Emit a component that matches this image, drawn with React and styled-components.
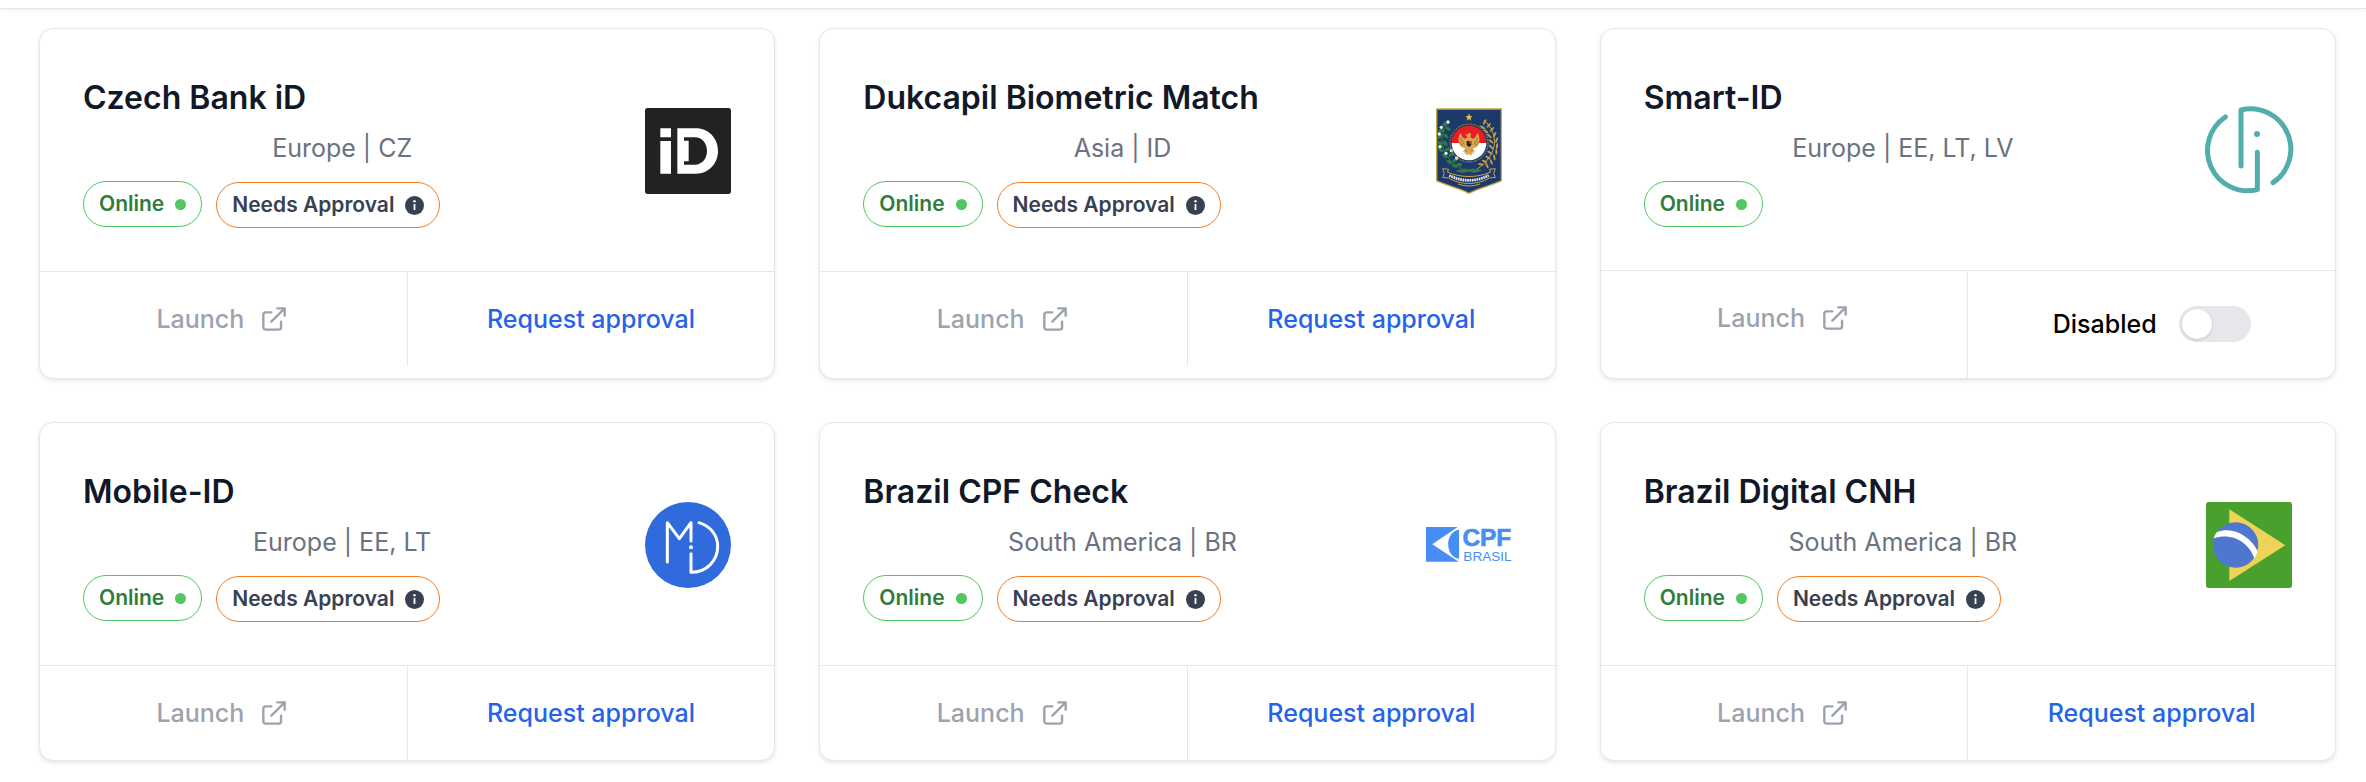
import React from 'react';
import styled, { createGlobalStyle } from 'styled-components';

const GlobalStyle = createGlobalStyle`
  *, *::before, *::after { box-sizing: border-box; }
  body {
    margin: 0;
    background: #ffffff;
    color: #000000;
    font-family: Inter, "Liberation Sans", sans-serif;
  }
`;

const TopBar = styled.header`
  height: 9px;
  background: #ffffff;
  border-bottom: 1px solid #e5e7eb;
  box-shadow: 0 2px 4px rgba(0, 0, 0, 0.05);
`;

const Grid = styled.main`
  display: grid;
  grid-template-columns: repeat(3, minmax(0, 1fr));
  gap: 43px 44px;
  padding: 19px 30px 20px 39px;
`;

const Card = styled.article`
  display: flex;
  flex-direction: column;
  background: #ffffff;
  border: 1px solid #e5e7eb;
  border-radius: 14px;
  box-shadow: 0 2px 4px rgba(0, 0, 0, 0.1);
`;

const CardBody = styled.div`
  display: flex;
  align-items: center;
  gap: 44px;
  padding: 44px 43px 43px;
`;

const Details = styled.div`
  flex: 1;
  min-width: 0;
`;

const Title = styled.h2`
  margin: 0;
  font-size: 32px;
  line-height: 50px;
  font-weight: 600;
  color: #111827;
`;

const Region = styled.p`
  margin: 5px 0 13px;
  font-size: 25px;
  line-height: 40px;
  text-align: center;
  color: #6b7280;
`;

const Badges = styled.div`
  display: flex;
  align-items: flex-start;
  gap: 14px;
`;

const Badge = styled.span`
  display: inline-flex;
  align-items: center;
  gap: 11px;
  height: 46px;
  padding: 0 15px;
  border: 1px solid #51c75f;
  border-radius: 23px;
  font-size: 21px;
  line-height: 30px;
  font-weight: 600;
  color: #2f7d3b;
`;

const ApprovalBadge = styled(Badge)`
  margin-top: 1px;
  border-color: #f47b20;
  color: #374151;
`;

const Dot = styled.i`
  width: 11px;
  height: 11px;
  border-radius: 50%;
  background: #51c75f;
`;

const LogoSlot = styled.div`
  display: flex;
  align-items: center;
  justify-content: center;
  width: 86px;
  height: 86px;
  flex: none;

  svg { display: block; width: 100%; overflow: visible; }
`;

const Actions = styled.div`
  display: flex;
  flex: 1;
  align-items: ${(p) => (p.$stretch ? 'stretch' : 'flex-start')};
  border-top: 1px solid #e5e7eb;

  > * + * { border-left: 1px solid #e5e7eb; }
`;

const Action = styled.div`
  display: flex;
  flex: 1;
  justify-content: center;
  align-items: flex-start;
`;

const ActionButton = styled.button`
  display: flex;
  align-items: center;
  justify-content: center;
  gap: 14px;
  width: 100%;
  padding: 28px 14px;
  border: 0;
  background: none;
  font: 500 25px/38px Inter, "Liberation Sans", sans-serif;
  color: #2563eb;
  cursor: pointer;

  &:disabled { color: #9ca3af; cursor: default; }
`;

const ToggleRow = styled.label`
  display: flex;
  align-items: center;
  gap: 22px;
  padding: 35px 14px 36px;
  font-size: 25px;
  line-height: 36px;
  font-weight: 500;
`;

const Toggle = styled.input`
  appearance: none;
  width: 72px;
  height: 36px;
  margin: 0;
  padding: 3px;
  border-radius: 18px;
  background: #e5e7eb;

  &::before {
    content: '';
    display: block;
    width: 30px;
    height: 30px;
    border-radius: 50%;
    background: #ffffff;
    box-shadow: 0 1px 3px rgba(0, 0, 0, 0.15);
  }

  &:checked { background: #2563eb; }
  &:checked::before { margin-left: auto; }
`;

const LaunchIcon = () => (
  <svg width="32" height="32" viewBox="0 0 24 24" fill="none" stroke="currentColor" strokeWidth="1.8" strokeLinecap="round" strokeLinejoin="round" aria-hidden="true">
    <path d="M10 7H5.8A1.8 1.8 0 004 8.8v9.4A1.8 1.8 0 005.8 20h9.7a1.8 1.8 0 001.8-1.8V14M14.5 4H20m0 0v5.5m0-5.5L10 14" />
  </svg>
);

const InfoIcon = () => (
  <svg width="19" height="19" viewBox="0 0 19 19" aria-hidden="true">
    <circle cx="9.5" cy="9.5" r="9.5" fill="#374151" />
    <circle cx="9.5" cy="5.3" r="1.2" fill="#fff" />
    <path d="M9.5 8v6" stroke="#fff" strokeWidth="1.8" fill="none" />
  </svg>
);

const BankIdLogo = () => (
  <svg viewBox="48 50 258 258" role="img" aria-label="Bank iD">
    <rect x="48" y="50" width="258" height="258" rx="8" fill="#222" />
    <path fill="#fff" fillRule="evenodd" d="M94 111h32v27H94zM94 149h32v98H94zM145 111h56c38 0 66 30 66 68s-28 68-66 68h-56zM165 138v10h14v62h-14v10h33c21 0 36-18 36-41s-15-41-36-41z" />
  </svg>
);

const leaves = [
  [72, 98, -40], [62, 118, -10], [82, 112, 30], [57, 136, -30], [76, 134, 40], [58, 156, 10],
  [74, 156, 60], [60, 176, 30], [80, 174, -30], [72, 194, 40], [92, 190, -20], [86, 212, 30],
  [104, 206, -30], [102, 224, 20], [116, 220, -10],
];
const cotton = [[82, 92], [62, 108], [56, 128], [58, 166], [76, 186], [108, 200], [92, 178]];
const grains = [
  [192, 92, 30], [204, 102, 40], [186, 108, -60], [214, 114, 40], [196, 120, -50], [222, 130, 30],
  [206, 134, -50], [228, 146, 20], [211, 150, -50], [229, 164, 10], [211, 167, -50], [227, 181, 0],
  [208, 184, -60], [221, 198, -10], [202, 199, -60], [212, 212, -20], [192, 210, -70], [199, 223, -30], [180, 219, -80],
];

const DukcapilLogo = () => (
  <svg viewBox="16 50 258 258" role="img" aria-label="Dukcapil">
    <path d="M48 53h194v215c-28 14-68 22-97 38-29-16-69-24-97-38z" fill="#1b3a69" stroke="#c9a44c" strokeWidth="4" />
    <path d="M145 66l3 8h8l-6 5 2 9-7-5-7 5 2-9-6-5h8z" fill="#e5b75a" />
    <path d="M86 92C48 130 58 200 124 232" fill="none" stroke="#3f7d45" strokeWidth="3" />
    {leaves.map(([x, y, r]) => (
      <ellipse key={`${x}-${y}`} cx={x} cy={y} rx="9" ry="5" fill="#2f7a3e" transform={`rotate(${r} ${x} ${y})`} />
    ))}
    {cotton.map(([x, y]) => <circle key={`${x}-${y}`} cx={x} cy={y} r="5" fill="#e8f2e6" />)}
    <path d="M190 86C236 128 234 190 168 234" fill="none" stroke="#cda350" strokeWidth="3" />
    {grains.map(([x, y, r]) => (
      <ellipse key={`${x}-${y}`} cx={x} cy={y} rx="3" ry="9" fill="#c79f4b" transform={`rotate(${r} ${x} ${y})`} />
    ))}
    <circle cx="145" cy="155" r="57" fill="none" stroke="#b9934a" strokeWidth="3" strokeDasharray="5 3" />
    <path d="M93 155a52 52 0 01104 0z" fill="#ec1c24" />
    <path d="M93 155a52 52 0 00104 0z" fill="#fff" />
    <path d="M141 128c4-5 10-3 10 2l-2 8 8 4c7-2 10-10 13-18 7 10 9 24 4 35-4 8-10 11-17 12l6 12-8-3-3 13-7-6-7 6-3-13-8 3 6-12c-7-1-13-4-17-12-5-11-3-25 4-35 3 8 6 16 13 18l8-4-4-5-3-3z" fill="#d9a74f" />
    <path d="M118 138l12 22M112 148l14 16M172 138l-12 22M178 148l-14 16M138 175l-6 12M152 175l6 12" stroke="#8b5d25" strokeWidth="2" fill="none" />
    <path d="M138 149h14v12l-7 6-7-6z" fill="#222" />
    <path d="M145 149h7v8h-7z" fill="#c8342d" />
    <path d="M108 238c14-1 24-8 36-2 14-6 26 1 38 0-14 8-28 8-38 3-10 5-24 5-36-1z" fill="#2f7a3e" stroke="#6b7b38" strokeWidth="2" />
    <path d="M66 232l18 2-4 8c38 18 92 18 130 0l-4-8 18-2-5 14 5 12-18 2c-36 22-86 22-122 0l-18-2 5-12z" fill="#1b3a69" stroke="#cda350" strokeWidth="3" />
    <path d="M86 252c36 20 82 20 118 0" fill="none" stroke="#e9edf5" strokeWidth="8" strokeDasharray="5 2" />
    <path d="M112 278q33 12 66 0" fill="none" stroke="#cda350" strokeWidth="3" />
  </svg>
);

const SmartIdLogo = () => (
  <svg viewBox="48 48 258 258" role="img" aria-label="Smart-ID" fill="none" stroke="#52aeab" strokeWidth="15" strokeLinecap="round" strokeLinejoin="round">
    <path d="M106 78A121 121 0 00202 296V184" />
    <path d="M153 225V57A121 121 0 01249 275" />
    <circle cx="201" cy="129" r="9" fill="#52aeab" stroke="none" />
  </svg>
);

const MobileIdLogo = () => (
  <svg viewBox="48 48 258 258" role="img" aria-label="Mobile-ID">
    <circle cx="177" cy="177" r="129" fill="#2f6bdc" />
    <path d="M115 228V110l36 48 35-48v55M186 203v56c48 0 80-36 80-78 0-32-20-60-56-71" fill="none" stroke="#fff" strokeWidth="9" strokeLinecap="round" strokeLinejoin="round" />
    <circle cx="186" cy="184" r="6" fill="#fff" />
  </svg>
);

const CpfLogo = () => (
  <svg viewBox="45 78 260 105" role="img" aria-label="CPF Brasil" fill="#468ef5">
    <path d="M45 78h96L64 130l80 53H45zM145 86v88c-20-2-33-22-33-44s13-42 33-44z" />
    <text x="155" y="135" fontFamily="'Liberation Sans', sans-serif" fontWeight="700" fontSize="74" stroke="#468ef5" strokeWidth="2">CPF</text>
    <text x="158" y="181" fontFamily="'Liberation Sans', sans-serif" fontSize="41">BRASIL</text>
  </svg>
);

const BrazilLogo = () => (
  <svg viewBox="48 48 258 258" role="img" aria-label="Brazil">
    <rect x="48" y="48" width="258" height="258" rx="8" fill="#4aa02c" />
    <path d="M118 70l168 108-168 107z" fill="#efd358" />
    <circle cx="137" cy="177" r="68" fill="#5077cf" />
    <path d="M81 138c48-18 100 12 122 57-2 8-5 16-10 23C178 168 124 138 71 157c2-7 6-14 10-19z" fill="#fff" />
  </svg>
);

const providers = [
  { name: 'Czech Bank iD', region: 'Europe | CZ', Logo: BankIdLogo, approval: true },
  { name: 'Dukcapil Biometric Match', region: 'Asia | ID', Logo: DukcapilLogo, approval: true },
  { name: 'Smart-ID', region: 'Europe | EE, LT, LV', Logo: SmartIdLogo, approval: false },
  { name: 'Mobile-ID', region: 'Europe | EE, LT', Logo: MobileIdLogo, approval: true },
  { name: 'Brazil CPF Check', region: 'South America | BR', Logo: CpfLogo, approval: true },
  { name: 'Brazil Digital CNH', region: 'South America | BR', Logo: BrazilLogo, approval: true },
];

const ProviderCard = ({ name, region, Logo, approval }) => (
  <Card>
    <CardBody>
      <Details>
        <Title>{name}</Title>
        <Region>{region}</Region>
        <Badges>
          <Badge>Online<Dot /></Badge>
          {approval && <ApprovalBadge>Needs Approval<InfoIcon /></ApprovalBadge>}
        </Badges>
      </Details>
      <LogoSlot><Logo /></LogoSlot>
    </CardBody>
    <Actions $stretch={!approval}>
      <Action>
        <ActionButton type="button" disabled>Launch<LaunchIcon /></ActionButton>
      </Action>
      <Action>
        {approval ? (
          <ActionButton type="button">Request approval</ActionButton>
        ) : (
          <ToggleRow>Disabled<Toggle type="checkbox" role="switch" /></ToggleRow>
        )}
      </Action>
    </Actions>
  </Card>
);

export default function App() {
  return (
    <>
      <GlobalStyle />
      <TopBar />
      <Grid>
        {providers.map((p) => <ProviderCard key={p.name} {...p} />)}
      </Grid>
    </>
  );
}
